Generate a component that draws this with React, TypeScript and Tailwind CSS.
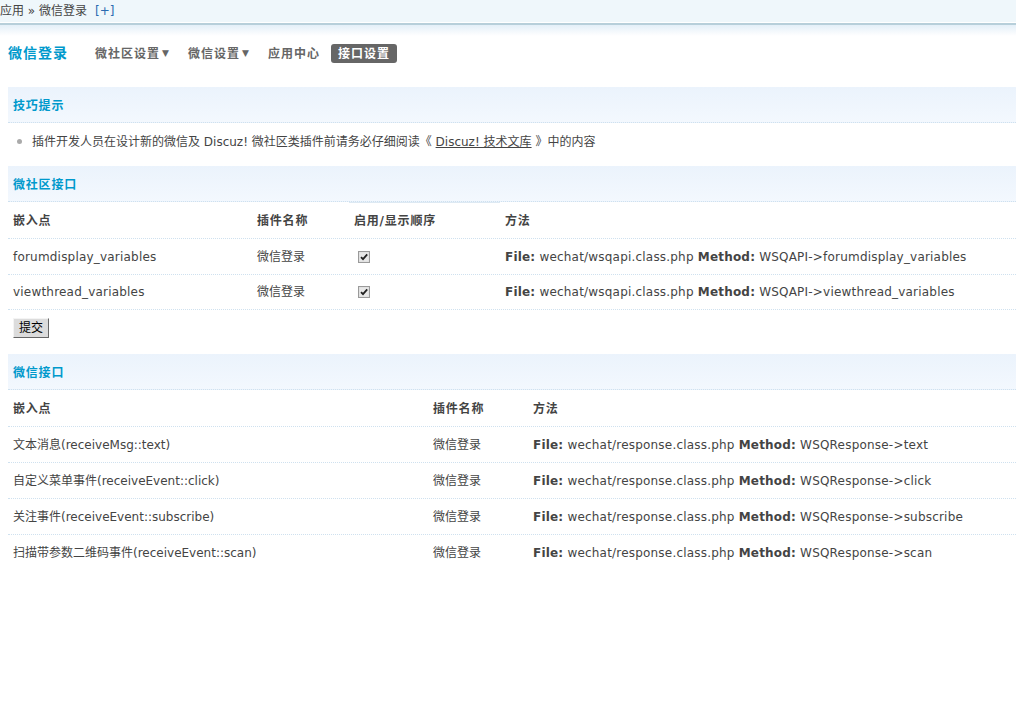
import React from "react";

const font = { fontFamily: '"DejaVu Sans", "Noto Sans CJK SC", sans-serif' };

const dot = "border-dotted border-[#cfe1ef]";

function CheckBox() {
  return (
    <svg width="12" height="12" viewBox="0 0 12 12" className="ml-[4px]">
      <rect x="0.5" y="0.5" width="11" height="11" fill="#dcdcdc" stroke="#9a9a9a" />
      <rect x="1.5" y="1.5" width="9" height="9" fill="#e8e8e8" />
      <path d="M3 6.2 L5 8.2 L9.2 3.4" fill="none" stroke="#222" strokeWidth="1.8" />
    </svg>
  );
}

function SectionHead({ title }: { title: string }) {
  return (
    <div className={`h-9 flex items-center pl-[5px] pt-[2px] bg-linear-to-b from-[#ebf3fc] to-[#f3f8fe] border-b ${dot}`}>
      <span className="text-[12px] font-bold text-[#0099cc] tracking-[0.8px]">{title}</span>
    </div>
  );
}

function Method({ file, method }: { file: string; method: string }) {
  return (
    <span className="tracking-[0.2px]">
      <b className="text-[#444]">File:</b> {file} <b className="text-[#444]">Method:</b> {method}
    </span>
  );
}

const hooks = [
  { point: "forumdisplay_variables", method: "WSQAPI->forumdisplay_variables" },
  { point: "viewthread_variables", method: "WSQAPI->viewthread_variables" },
];

const wxHooks = [
  { point: "文本消息(receiveMsg::text)", method: "WSQResponse->text" },
  { point: "自定义菜单事件(receiveEvent::click)", method: "WSQResponse->click" },
  { point: "关注事件(receiveEvent::subscribe)", method: "WSQResponse->subscribe" },
  { point: "扫描带参数二维码事件(receiveEvent::scan)", method: "WSQResponse->scan" },
];

export default function App() {
  return (
    <div style={font} className="w-[1016px] h-[702px] bg-white text-[12px] text-[#444] overflow-hidden">
      {/* breadcrumb bar */}
      <div className="h-[23px] bg-[#eff7fb] flex items-center text-[#444] border-b border-white">
        <span>应用 » 微信登录</span>
        <span className="ml-[8px] text-[#2a6ab0]">[+]</span>
      </div>
      <div className="h-[2px] bg-[#b7cfda]" />

      <div className="bg-[linear-gradient(#e4eff8,#ffffff_11px)] pl-2">
        {/* title + nav */}
        <div className="pt-[18px] h-[62px] flex items-start">
          <h1 className="h-[20px] flex items-center text-[14px] font-bold text-[#0099cc] tracking-[1px]">微信登录</h1>
          <nav className="ml-[20px] mt-px flex gap-[4px] text-[12px] font-bold text-[#666] tracking-[1px]">
            <span className="h-[19px] px-[7px] flex items-center">微社区设置<span className="ml-[2px] text-[9px]">▼</span></span>
            <span className="h-[19px] px-[7px] flex items-center">微信设置<span className="ml-[2px] text-[9px]">▼</span></span>
            <span className="h-[19px] px-[7px] flex items-center">应用中心</span>
            <span className="h-[19px] px-[7px] flex items-center bg-[#666] text-white rounded-[3px]">接口设置</span>
          </nav>
        </div>

        {/* tips */}
        <SectionHead title="技巧提示" />
        <div className="h-9 flex items-center pl-[9px] mb-[7px] pt-px">
          <span className="w-[5px] h-[5px] rounded-full bg-[#aaa] mr-[10px]" />
          <span>
            插件开发人员在设计新的微信及 Discuz! 微社区类插件前请务必仔细阅读《 <span className="underline">Discuz! 技术文库</span> 》中的内容
          </span>
        </div>

        {/* wsq hooks */}
        <SectionHead title="微社区接口" />
        <div className="flex h-9 font-bold tracking-[0.8px] pt-px">
          <div className="w-[244px] pl-[5px] flex items-center">嵌入点</div>
          <div className="w-[97px] pl-[5px] flex items-center">插件名称</div>
          <div className="w-[151px] pl-[5px] flex items-center border-t border-[#dde9f3] -mt-px">启用/显示顺序</div>
          <div className="flex-1 pl-[5px] flex items-center">方法</div>
        </div>
        {hooks.map((h, i) => (
          <div key={h.point} className={`flex h-9 border-t ${dot} ${i === hooks.length - 1 ? "border-b" : ""}`}>
            <div className="w-[244px] pl-[5px] flex items-center tracking-[0.2px]">{h.point}</div>
            <div className="w-[97px] pl-[5px] flex items-center">微信登录</div>
            <div className="w-[151px] pl-[5px] flex items-center">
              <CheckBox />
            </div>
            <div className="flex-1 pl-[5px] flex items-center">
              <Method file="wechat/wsqapi.class.php" method={h.method} />
            </div>
          </div>
        ))}
        <div className="h-9 flex items-center pl-[5px] mb-[8px]">
          <button className="h-[20px] w-[36px] bg-[#dcdcdc] border border-t-[#f4f4f4] border-l-[#f4f4f4] border-r-[#666] border-b-[#666] text-black text-[12px] leading-none">
            提交
          </button>
        </div>

        {/* wechat hooks */}
        <SectionHead title="微信接口" />
        <div className="flex h-9 font-bold tracking-[0.8px] pt-px">
          <div className="w-[420px] pl-[5px] flex items-center">嵌入点</div>
          <div className="w-[100px] pl-[5px] flex items-center">插件名称</div>
          <div className="flex-1 pl-[5px] flex items-center">方法</div>
        </div>
        {wxHooks.map((h) => (
          <div key={h.point} className={`flex h-9 border-t ${dot}`}>
            <div className="w-[420px] pl-[5px] flex items-center">{h.point}</div>
            <div className="w-[100px] pl-[5px] flex items-center">微信登录</div>
            <div className="flex-1 pl-[5px] flex items-center">
              <Method file="wechat/response.class.php" method={h.method} />
            </div>
          </div>
        ))}
      </div>
    </div>
  );
}
